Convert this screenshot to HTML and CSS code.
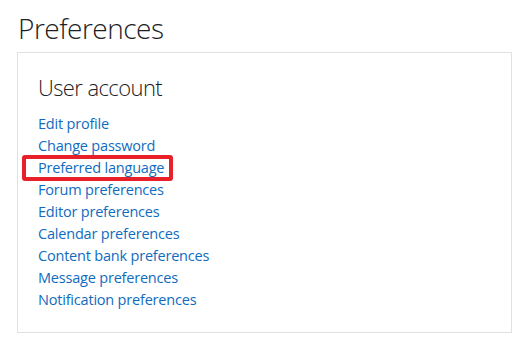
FILE: index.html
```html
<!DOCTYPE html>
<html lang="en">
  <head>
    <meta charset="UTF-8" />
    <meta name="viewport" content="width=device-width, initial-scale=1.0" />
    <title>Preferences</title>
    <link rel="stylesheet" href="styles.css">
  </head>
  <body>
    <div class="page">
      <h2 class="page-title">Preferences</h2>
      <div class="card">
        <h3 class="card-title">User account</h3>
        <ul class="pref-list">
          <li><a href="#">Edit profile</a></li>
          <li><a href="#">Change password</a></li>
          <li class="highlight"><a href="#">Preferred language</a></li>
          <li><a href="#">Forum preferences</a></li>
          <li><a href="#">Editor preferences</a></li>
          <li><a href="#">Calendar preferences</a></li>
          <li><a href="#">Content bank preferences</a></li>
          <li><a href="#">Message preferences</a></li>
          <li><a href="#">Notification preferences</a></li>
        </ul>
      </div>
    </div>
  </body>
</html>
```

FILE: styles.css
```css
body {
  margin: 0;
  background: #fff;
  color: #1d2125;
  font-family: "Open Sans", "Noto Sans", sans-serif;
}
.page {
  padding: 10px 13px 0 17px;
}
.page-title {
  font-weight: 300;
  font-size: 28px;
  letter-spacing: -0.5px;
  line-height: 36px;
  margin: 0 0 6px 1px;
}
.card {
  border: 1px solid #dee2e6;
  padding: 20px 20px 21px 20px;
}
.card-title {
  font-weight: 300;
  font-size: 22px;
  letter-spacing: -0.6px;
  line-height: 28px;
  margin: 0 0 12px 0;
}
.pref-list {
  list-style: none;
  margin: 0;
  padding: 0;
}
.pref-list li {
  font-size: 14.5px;
  letter-spacing: -0.2px;
  line-height: 22px;
  position: relative;
}
.pref-list a {
  color: #0f6cbf;
  text-decoration: none;
  position: relative;
}
.highlight::before {
  content: "";
  position: absolute;
  left: -16px;
  top: -2px;
  width: 143px;
  height: 18px;
  border: 4px solid #e8202a;
  border-radius: 3px;
}
```
